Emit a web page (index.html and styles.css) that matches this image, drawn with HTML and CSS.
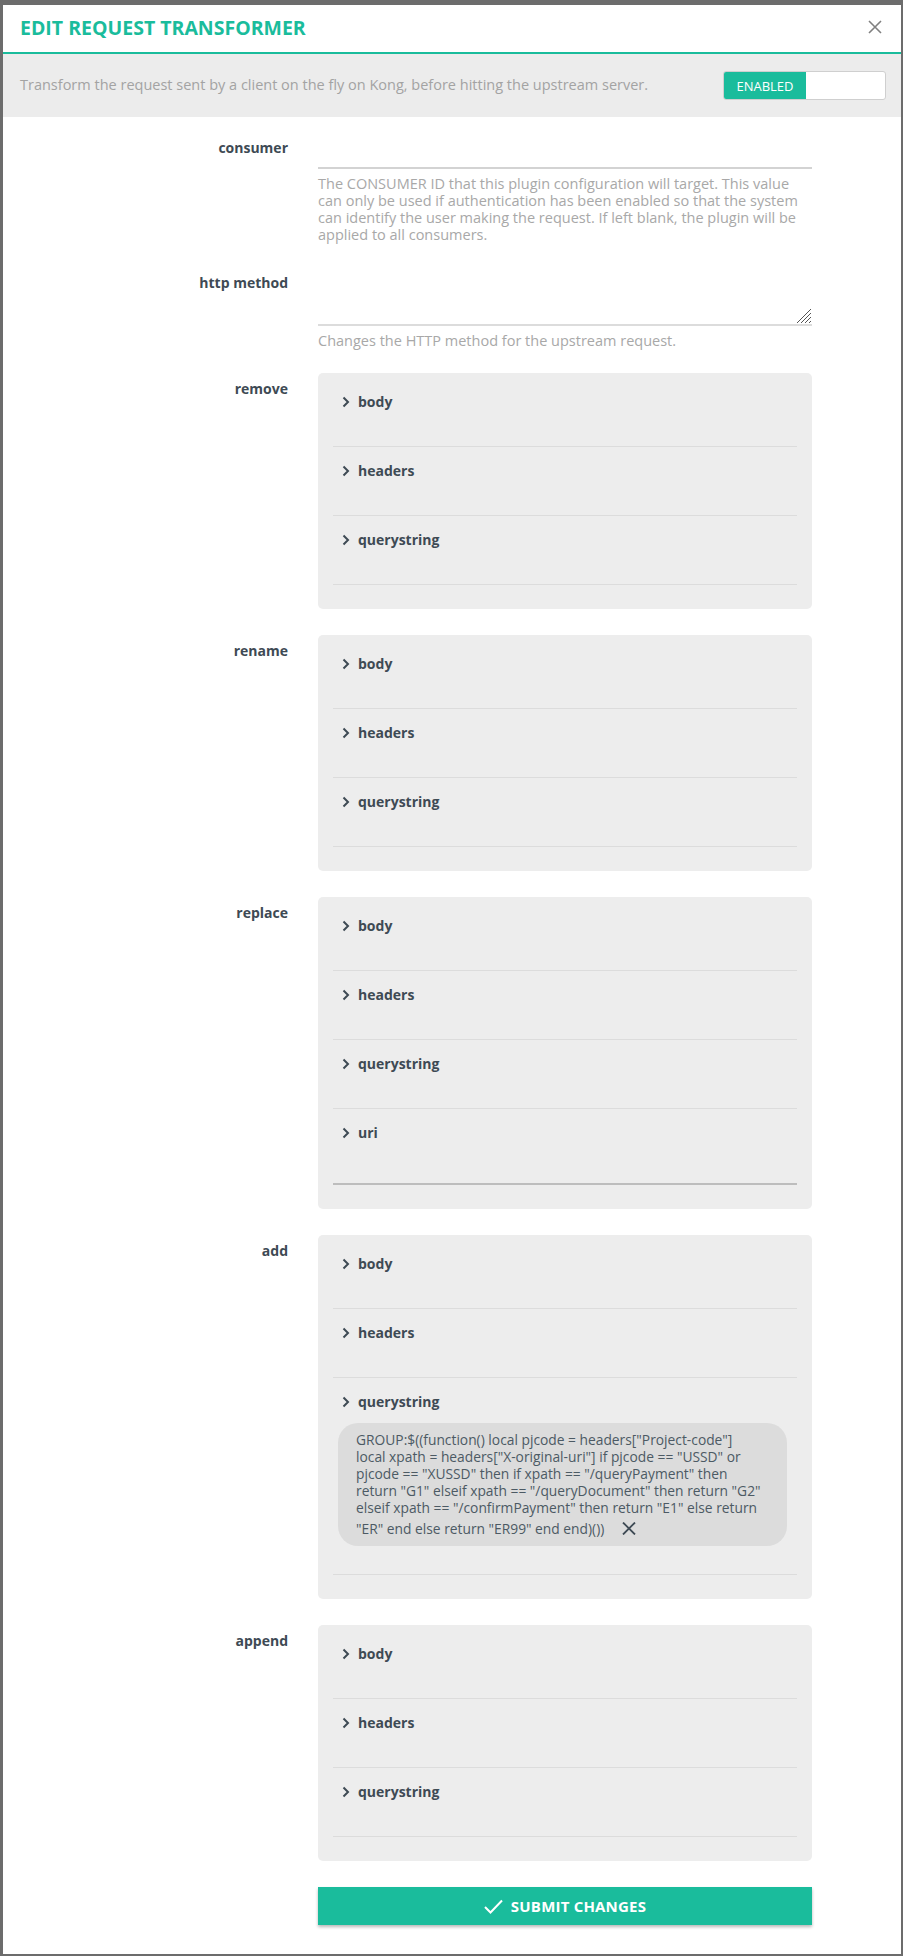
FILE: index.html
```html
<!DOCTYPE html>
<html lang="en">
<head>
<meta charset="utf-8">
<title>Edit Request Transformer</title>
<link rel="stylesheet" href="styles.css">
</head>
<body>
<div class="modal">
  <div class="modal-header">
    <h4 class="title">EDIT REQUEST TRANSFORMER</h4>
    <button class="close" type="button" aria-label="Close">
      <svg width="14" height="14" viewBox="0 0 14 14"><path d="M1 1L13 13M13 1L1 13" stroke="#808080" stroke-width="1.6" fill="none"/></svg>
    </button>
  </div>
  <div class="intro">
    <p class="intro-text">Transform the request sent by a client on the fly on Kong, before hitting the upstream server.</p>
    <div class="toggle"><span class="toggle-on">ENABLED</span><span class="toggle-off"></span></div>
  </div>

  <form class="form">
    <div class="row row-consumer">
      <label class="label">consumer</label>
      <div class="field">
        <input class="line-input" type="text">
        <p class="help">The CONSUMER ID that this plugin configuration will target. This value<br>can only be used if authentication has been enabled so that the system<br>can identify the user making the request. If left blank, the plugin will be<br>applied to all consumers.</p>
      </div>
    </div>

    <div class="row row-http">
      <label class="label">http method</label>
      <div class="field">
        <div class="textarea-wrap">
          <textarea class="line-textarea"></textarea>
          <svg class="grip" width="17" height="17" viewBox="0 0 17 17"><path d="M16 2L2 16M16 6L6 16M16 10L10 16M16 14L14 16" stroke="#555" stroke-width="1" fill="none"/></svg>
        </div>
        <p class="help">Changes the HTTP method for the upstream request.</p>
      </div>
    </div>

    <div class="row row-box">
      <label class="label">remove</label>
      <div class="field">
        <div class="box">
          <div class="item"><div class="item-head"><svg class="chev" width="8" height="12" viewBox="0 0 8 12"><path d="M1.5 1.5L6 6L1.5 10.5" stroke="#3e4a54" stroke-width="2" fill="none"/></svg>body</div></div>
          <div class="item"><div class="item-head"><svg class="chev" width="8" height="12" viewBox="0 0 8 12"><path d="M1.5 1.5L6 6L1.5 10.5" stroke="#3e4a54" stroke-width="2" fill="none"/></svg>headers</div></div>
          <div class="item"><div class="item-head"><svg class="chev" width="8" height="12" viewBox="0 0 8 12"><path d="M1.5 1.5L6 6L1.5 10.5" stroke="#3e4a54" stroke-width="2" fill="none"/></svg>querystring</div></div>
        </div>
      </div>
    </div>

    <div class="row row-box">
      <label class="label">rename</label>
      <div class="field">
        <div class="box">
          <div class="item"><div class="item-head"><svg class="chev" width="8" height="12" viewBox="0 0 8 12"><path d="M1.5 1.5L6 6L1.5 10.5" stroke="#3e4a54" stroke-width="2" fill="none"/></svg>body</div></div>
          <div class="item"><div class="item-head"><svg class="chev" width="8" height="12" viewBox="0 0 8 12"><path d="M1.5 1.5L6 6L1.5 10.5" stroke="#3e4a54" stroke-width="2" fill="none"/></svg>headers</div></div>
          <div class="item"><div class="item-head"><svg class="chev" width="8" height="12" viewBox="0 0 8 12"><path d="M1.5 1.5L6 6L1.5 10.5" stroke="#3e4a54" stroke-width="2" fill="none"/></svg>querystring</div></div>
        </div>
      </div>
    </div>

    <div class="row row-box">
      <label class="label">replace</label>
      <div class="field">
        <div class="box">
          <div class="item"><div class="item-head"><svg class="chev" width="8" height="12" viewBox="0 0 8 12"><path d="M1.5 1.5L6 6L1.5 10.5" stroke="#3e4a54" stroke-width="2" fill="none"/></svg>body</div></div>
          <div class="item"><div class="item-head"><svg class="chev" width="8" height="12" viewBox="0 0 8 12"><path d="M1.5 1.5L6 6L1.5 10.5" stroke="#3e4a54" stroke-width="2" fill="none"/></svg>headers</div></div>
          <div class="item"><div class="item-head"><svg class="chev" width="8" height="12" viewBox="0 0 8 12"><path d="M1.5 1.5L6 6L1.5 10.5" stroke="#3e4a54" stroke-width="2" fill="none"/></svg>querystring</div></div>
          <div class="item item-uri"><div class="item-head"><svg class="chev" width="8" height="12" viewBox="0 0 8 12"><path d="M1.5 1.5L6 6L1.5 10.5" stroke="#3e4a54" stroke-width="2" fill="none"/></svg>uri</div><input class="uri-input" type="text"></div>
        </div>
      </div>
    </div>

    <div class="row row-box">
      <label class="label">add</label>
      <div class="field">
        <div class="box">
          <div class="item"><div class="item-head"><svg class="chev" width="8" height="12" viewBox="0 0 8 12"><path d="M1.5 1.5L6 6L1.5 10.5" stroke="#3e4a54" stroke-width="2" fill="none"/></svg>body</div></div>
          <div class="item"><div class="item-head"><svg class="chev" width="8" height="12" viewBox="0 0 8 12"><path d="M1.5 1.5L6 6L1.5 10.5" stroke="#3e4a54" stroke-width="2" fill="none"/></svg>headers</div></div>
          <div class="item item-open"><div class="item-head"><svg class="chev" width="8" height="12" viewBox="0 0 8 12"><path d="M1.5 1.5L6 6L1.5 10.5" stroke="#3e4a54" stroke-width="2" fill="none"/></svg>querystring</div>
            <div class="pill">GROUP:$((function() local pjcode = headers["Project-code"]<br>local xpath = headers["X-original-uri"] if pjcode == "USSD" or<br>pjcode == "XUSSD" then if xpath == "/queryPayment" then<br>return "G1" elseif xpath == "/queryDocument" then return "G2"<br>elseif xpath == "/confirmPayment" then return "E1" else return<span class="pill-tail">"ER" end else return "ER99" end end)())<svg class="pill-x" width="14" height="13" viewBox="0 0 14 13"><path d="M1 0.5L13 12.5M13 0.5L1 12.5" stroke="#3e4a54" stroke-width="1.8" fill="none"/></svg></span></div>
          </div>
        </div>
      </div>
    </div>

    <div class="row row-box">
      <label class="label">append</label>
      <div class="field">
        <div class="box">
          <div class="item"><div class="item-head"><svg class="chev" width="8" height="12" viewBox="0 0 8 12"><path d="M1.5 1.5L6 6L1.5 10.5" stroke="#3e4a54" stroke-width="2" fill="none"/></svg>body</div></div>
          <div class="item"><div class="item-head"><svg class="chev" width="8" height="12" viewBox="0 0 8 12"><path d="M1.5 1.5L6 6L1.5 10.5" stroke="#3e4a54" stroke-width="2" fill="none"/></svg>headers</div></div>
          <div class="item"><div class="item-head"><svg class="chev" width="8" height="12" viewBox="0 0 8 12"><path d="M1.5 1.5L6 6L1.5 10.5" stroke="#3e4a54" stroke-width="2" fill="none"/></svg>querystring</div></div>
        </div>
      </div>
    </div>

    <div class="actions">
      <button class="submit" type="button">
        <svg width="19" height="15" viewBox="0 0 19 15"><path d="M1 8L6.5 13.5L18 1.5" stroke="#ffffff" stroke-width="2" fill="none"/></svg>
        <span>SUBMIT CHANGES</span>
      </button>
    </div>
  </form>
</div>
</body>
</html>
```

FILE: styles.css
```css
* { box-sizing: border-box; }
html, body { margin: 0; padding: 0; }
body {
  background: #6c6c6c;
  font-family: "Open Sans", "Liberation Sans", sans-serif;
  height: 1956px;
  overflow: hidden;
}
.modal {
  margin: 5px 2px 0 3px;
  background: #ffffff;
}
.modal-header {
  height: 49px;
  display: flex;
  align-items: center;
  justify-content: space-between;
  padding: 0 19px 2px 17px;
  border-bottom: 2px solid #1abc9c;
}
.title {
  margin: 0;
  font-size: 19.5px;
  font-weight: 700;
  color: #1abc9c;
  line-height: 24px;
}
.close {
  border: 0;
  background: transparent;
  padding: 0;
  width: 14px;
  height: 14px;
  display: flex;
  margin-top: -2px;
}
.intro {
  background: #ececec;
  height: 63px;
  display: flex;
  align-items: center;
  justify-content: space-between;
  padding: 0 15px 0 17px;
}
.intro-text {
  margin: 0 0 2px;
  font-size: 14.5px;
  color: #a3a3a3;
}
.toggle {
  width: 163px;
  height: 29px;
  border: 1px solid #cfcfcf;
  border-radius: 3px;
  background: #ffffff;
  display: flex;
  overflow: hidden;
}
.toggle-on {
  width: 82px;
  background: #1abc9c;
  color: #ffffff;
  font-size: 13px;
  display: flex;
  align-items: center;
  justify-content: center;
}
.toggle-off { flex: 1; }

.form { padding: 21px 0 29px; }
.row { display: flex; gap: 30px; }
.label {
  width: 285px;
  flex: none;
  text-align: right;
  font-weight: 700;
  font-size: 14px;
  line-height: 20px;
  color: #3e4a54;
}
.field { width: 494px; flex: none; }

.row-consumer { margin-bottom: 30px; }
.row-http { margin-bottom: 24px; }
.row-box { margin-bottom: 26px; }
.row-box .label { padding-top: 6px; }

.line-input {
  display: block;
  width: 100%;
  height: 31px;
  border: 0;
  border-bottom: 2px solid #d3d3d3;
  background: transparent;
  outline: none;
  padding: 0;
}
.textarea-wrap { position: relative; }
.line-textarea {
  display: block;
  width: 100%;
  height: 53px;
  border: 0;
  border-bottom: 2px solid #dcdcdc;
  background: transparent;
  outline: none;
  resize: none;
  padding: 0;
  font-family: inherit;
}
.grip {
  position: absolute;
  right: 0;
  bottom: 2px;
}
.help {
  margin: 6px 0 0;
  font-size: 14.5px;
  line-height: 17px;
  color: #a8a8a8;
  white-space: nowrap;
}

.box {
  background: #ededed;
  border-radius: 5px;
  padding: 5px 15px 24px;
}
.item {
  padding: 14px 0 34px;
  border-bottom: 1px solid #dcdcdc;
}
.item-open { padding-bottom: 28px; }
.item-uri { border-bottom: 0; padding-bottom: 0; }
.item-head {
  display: flex;
  align-items: center;
  gap: 8px;
  padding-left: 9px;
  font-weight: 700;
  font-size: 14px;
  line-height: 20px;
  color: #3e4a54;
}
.chev { flex: none; }
.uri-input {
  display: block;
  width: 100%;
  height: 42px;
  border: 0;
  border-bottom: 2px solid #bdbdbd;
  background: transparent;
  outline: none;
  padding: 0;
}
.pill {
  margin: 11px 10px 0 5px;
  background: #dcdcdc;
  border-radius: 20px;
  padding: 8px 12px 7px 18px;
  font-size: 13.8px;
  line-height: 17px;
  color: #4c5a64;
  white-space: nowrap;
}
.pill-tail {
  display: flex;
  align-items: center;
  gap: 18px;
  margin-top: 2px;
  line-height: 21px;
}
.pill-x { flex: none; }

.actions { padding-left: 315px; }
.submit {
  width: 494px;
  height: 38px;
  border: 0;
  background: #1abc9c;
  color: #ffffff;
  box-shadow: 0 2px 3px rgba(0, 0, 0, 0.28);
  display: flex;
  align-items: center;
  justify-content: center;
  gap: 8px;
  font-family: inherit;
  font-weight: 700;
  font-size: 15px;
  letter-spacing: 0.2px;
  padding: 0;
}
```
